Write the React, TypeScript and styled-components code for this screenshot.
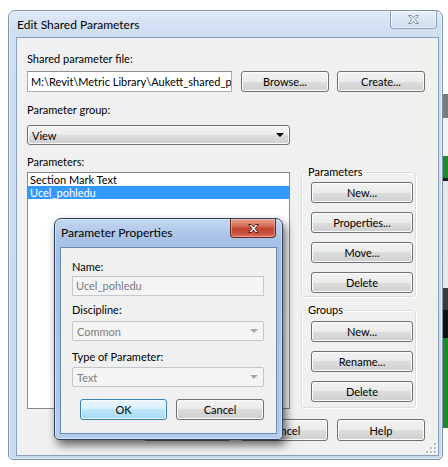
import React from "react";
import styled, { createGlobalStyle } from "styled-components";

const Global = createGlobalStyle`
  html, body { margin: 0; padding: 0; background: #ffffff; }
  body {
    font-family: Lato, "Noto Sans", sans-serif;
    font-size: 11px;
    color: #000;
  }
  * { box-sizing: border-box; }
`;

const Page = styled.div`
  position: relative;
  width: 448px;
  height: 467px;
  overflow: hidden;
  background: #fff;
`;

const Desk = styled.div`
  display: flex;
  align-items: flex-start;
  padding-left: 8px;
`;

const Window = styled.div<{ $active?: boolean }>`
  display: flex;
  flex-direction: column;
  border: 1px solid ${(p) => (p.$active ? "#2f4360" : "#7f91a9")};
  border-radius: 7px 7px 5px 5px;
  background: ${(p) =>
    p.$active
      ? "linear-gradient(180deg, #c3d7f1 0%, #a9c3e6 18px, #a3bfe3 40px, #b4cbea 100%)"
      : "linear-gradient(180deg, #dfe9f6 0%, #cfdef1 20px, #c8d8ed 100%)"};
  box-shadow: inset 0 0 0 1px rgba(255, 255, 255, 0.55);
`;

const MainWindow = styled(Window)`
  width: 435px;
  height: 450px;
  margin-top: 10px;
`;

const SubWindow = styled(Window)`
  position: absolute;
  left: 54px;
  top: 218px;
  width: 229px;
  height: 222px;
  box-shadow: inset 0 0 0 1px rgba(255, 255, 255, 0.45),
    3px 5px 10px rgba(0, 0, 0, 0.6);
`;

const TitleBar = styled.div<{ $h: number; $pl: number; $pr: number }>`
  display: flex;
  justify-content: space-between;
  align-items: flex-start;
  height: ${(p) => p.$h}px;
  padding-left: ${(p) => p.$pl}px;
  padding-right: ${(p) => p.$pr}px;
  flex: none;
`;

const Title = styled.div`
  margin-top: 6px;
  font-size: 12px;
  line-height: 16px;
  color: #000;
  white-space: nowrap;
`;

const CloseBtn = styled.div<{ $red?: boolean; $w: number; $h: number }>`
  width: ${(p) => p.$w}px;
  height: ${(p) => p.$h}px;
  display: flex;
  align-items: center;
  justify-content: center;
  border: 1px solid ${(p) => (p.$red ? "#6b2a22" : "#8a9db9")};
  border-top: none;
  border-radius: 0 0 4px 4px;
  background: ${(p) =>
    p.$red
      ? "linear-gradient(180deg, #e6a594 0%, #d56a55 40%, #c2432f 55%, #c9503f 80%, #dd7a68 100%)"
      : "linear-gradient(180deg, #e9f0f8 0%, #dbe6f3 50%, #d0ddee 100%)"};
  box-shadow: inset 0 0 0 1px
    ${(p) => (p.$red ? "rgba(255,200,190,0.45)" : "rgba(255,255,255,0.7)")};
`;

const Client = styled.div`
  position: relative;
  flex: 1;
  display: flex;
  flex-direction: column;
  background: #f0f0f0;
`;

const MainClient = styled(Client)`
  margin: 0 3px 3px 7px;
  border: 1px solid #8c9eb7;
  padding: 13px 13px 0 10px;
`;

const SubClient = styled(Client)`
  margin: 0 5px 5px 5px;
  border: 1px solid #6b89b2;
  padding: 11px 12px 0 11px;
`;

const Label = styled.div<{ $mt?: number }>`
  line-height: 15px;
  margin-top: ${(p) => p.$mt ?? 0}px;
  white-space: nowrap;
`;

const FileRow = styled.div`
  display: flex;
  margin-top: 5px;
  gap: 8px;
`;

const TextBox = styled.div<{ $disabled?: boolean; $w: number; $h: number; $mt?: number }>`
  width: ${(p) => p.$w}px;
  height: ${(p) => p.$h}px;
  margin-top: ${(p) => p.$mt ?? 0}px;
  margin-right: ${(p) => (p.$disabled ? 0 : 1)}px;
  border: 1px solid ${(p) => (p.$disabled ? "#c5c8cd" : "#abadb3")};
  border-top-color: ${(p) => (p.$disabled ? "#bfc2c7" : "#8e9199")};
  background: ${(p) => (p.$disabled ? "#f4f4f4" : "#fff")};
  color: ${(p) => (p.$disabled ? "#7a7a7a" : "#000")};
  padding-left: 3px;
  line-height: ${(p) => p.$h - 2}px;
  white-space: nowrap;
  overflow: hidden;
`;

const Button = styled.div<{ $w: number; $h?: number; $default?: boolean }>`
  width: ${(p) => p.$w}px;
  height: ${(p) => p.$h ?? 21}px;
  flex: none;
  display: flex;
  align-items: center;
  justify-content: center;
  border: 1px solid ${(p) => (p.$default ? "#3c7fb1" : "#707070")};
  border-radius: 3px;
  background: ${(p) =>
    p.$default
      ? "linear-gradient(180deg, #e9f6fd 0%, #d9f0fc 50%, #bee6fd 50%, #a7d9f5 100%)"
      : "linear-gradient(180deg, #f2f2f2 0%, #ebebeb 50%, #dddddd 50%, #cfcfcf 100%)"};
  box-shadow: inset 0 0 0 1px
    ${(p) => (p.$default ? "rgba(255,255,255,0.75)" : "#fcfcfc")};
  color: #000;
  line-height: 15px;
  white-space: nowrap;
`;

const Combo = styled.div<{ $disabled?: boolean; $w: number; $mt?: number }>`
  width: ${(p) => p.$w}px;
  height: 20px;
  margin-top: ${(p) => p.$mt ?? 0}px;
  display: flex;
  align-items: center;
  justify-content: space-between;
  padding: 0 5px 0 4px;
  border: 1px solid ${(p) => (p.$disabled ? "#c3c6cb" : "#707070")};
  border-radius: ${(p) => (p.$disabled ? 2 : 3)}px;
  background: ${(p) =>
    p.$disabled
      ? "#f4f4f4"
      : "linear-gradient(180deg, #f2f2f2 0%, #ebebeb 50%, #dddddd 50%, #cfcfcf 100%)"};
  box-shadow: ${(p) => (p.$disabled ? "none" : "inset 0 0 0 1px #fcfcfc")};
  color: ${(p) => (p.$disabled ? "#7d7d7d" : "#000")};
  white-space: nowrap;
`;

const Arrow = styled.span<{ $disabled?: boolean }>`
  width: 0;
  height: 0;
  border-left: 4px solid transparent;
  border-right: 4px solid transparent;
  border-top: 4px solid ${(p) => (p.$disabled ? "#a6a6a6" : "#000")};
`;

const MainArea = styled.div`
  display: flex;
  gap: 11px;
  margin-top: 9px;
`;

const LeftCol = styled.div`
  width: 263px;
  display: flex;
  flex-direction: column;
`;

const RightCol = styled.div`
  width: 115px;
  margin-top: 11px;
  display: flex;
  flex-direction: column;
`;

const ListBox = styled.div`
  margin-top: 3px;
  height: 237px;
  border: 1px solid #828790;
  background: #fff;
  display: flex;
  flex-direction: column;
`;

const ListItem = styled.div<{ $selected?: boolean }>`
  height: 13px;
  line-height: 13px;
  padding-left: 2px;
  background: ${(p) => (p.$selected ? "#3399ff" : "transparent")};
  color: ${(p) => (p.$selected ? "#fff" : "#000")};
  white-space: nowrap;
`;

const Group = styled.fieldset<{ $pt: number; $pb: number; $mt?: number }>`
  margin: ${(p) => p.$mt ?? 0}px 0 0 0;
  min-width: 0;
  padding: ${(p) => p.$pt}px 2px ${(p) => p.$pb}px 9px;
  border: 1px solid #d5dfe5;
  border-radius: 3px;
  box-shadow: inset 1px 1px 0 #fff, 1px 1px 0 #fff;
  display: flex;
  flex-direction: column;
  gap: 9px;
`;

const Legend = styled.legend`
  padding: 0 1px;
  margin-left: -4px;
  line-height: 14px;
  font-size: 11px;
  color: #000;
`;

const BottomRow = styled.div`
  display: flex;
  justify-content: flex-end;
  gap: 9px;
  margin-top: 10px;
`;

const SubButtons = styled.div`
  display: flex;
  justify-content: flex-end;
  gap: 9px;
  margin-top: 12px;
`;

const Grip = styled.svg`
  position: absolute;
  right: 1px;
  bottom: 1px;
`;

const Strip = styled.div`
  width: 5px;
  height: 467px;
  display: flex;
  flex-direction: column;
  flex: none;
`;

const StripPart = styled.div<{ $h: number; $c: string }>`
  height: ${(p) => p.$h}px;
  background: ${(p) => p.$c};
  flex: none;
`;

const Tick = styled.div`
  width: 1px;
  height: 8px;
  margin-left: 369px;
  background: #222;
`;

const XIcon = ({ fill, stroke }: { fill: string; stroke: string }) => (
  <svg width="13" height="11" viewBox="0 0 13 11">
    <path
      d="M1.5 1.5 H4.5 L6.5 4 L8.5 1.5 H11.5 L8 5.5 L11.5 9.5 H8.5 L6.5 7 L4.5 9.5 H1.5 L5 5.5 Z"
      fill={fill}
      stroke={stroke}
      strokeWidth="1"
      strokeLinejoin="round"
    />
  </svg>
);

export default function App() {
  return (
    <>
      <Global />
      <Page>
        <Desk>
          <MainWindow>
            <TitleBar $h={26} $pl={8} $pr={5}>
              <Title>Edit Shared Parameters</Title>
              <CloseBtn $w={47} $h={18}>
                <XIcon fill="#f4f7fb" stroke="#7d8ca3" />
              </CloseBtn>
            </TitleBar>
            <MainClient>
              <Label>Shared parameter file:</Label>
              <FileRow>
                <TextBox $w={205} $h={21}>
                  M:\Revit\Metric Library\Aukett_shared_p
                </TextBox>
                <Button $w={88}>Browse...</Button>
                <Button $w={88}>Create...</Button>
              </FileRow>
              <Label $mt={10}>Parameter group:</Label>
              <Combo $w={263} $mt={8}>
                <span>View</span>
                <Arrow />
              </Combo>
              <MainArea>
                <LeftCol>
                  <Label>Parameters:</Label>
                  <ListBox>
                    <ListItem>Section Mark Text</ListItem>
                    <ListItem $selected>Ucel_pohledu</ListItem>
                  </ListBox>
                </LeftCol>
                <RightCol>
                  <Group $pt={3} $pb={3}>
                    <Legend>Parameters</Legend>
                    <Button $w={102}>New...</Button>
                    <Button $w={102}>Properties...</Button>
                    <Button $w={102}>Move...</Button>
                    <Button $w={102}>Delete</Button>
                  </Group>
                  <Group $pt={4} $pb={5} $mt={6}>
                    <Legend>Groups</Legend>
                    <Button $w={102}>New...</Button>
                    <Button $w={102}>Rename...</Button>
                    <Button $w={102}>Delete</Button>
                  </Group>
                </RightCol>
              </MainArea>
              <BottomRow>
                <Button $w={88} $h={22}>OK</Button>
                <Button $w={88} $h={22}>Cancel</Button>
                <Button $w={88} $h={22}>Help</Button>
              </BottomRow>
              <Grip width="11" height="11" viewBox="0 0 11 11">
                {[
                  [8, 0],
                  [8, 4],
                  [4, 4],
                  [8, 8],
                  [4, 8],
                  [0, 8],
                ].map(([x, y], i) => (
                  <g key={i}>
                    <rect x={x + 1} y={y + 1} width="2" height="2" fill="#fff" />
                    <rect x={x} y={y} width="2" height="2" fill="#b8bcc2" />
                  </g>
                ))}
              </Grip>
            </MainClient>
          </MainWindow>
          <Strip>
            <StripPart $h={94} $c="#ffffff" />
            <StripPart $h={24} $c="#7b7b7b" />
            <StripPart $h={38} $c="#f4f4f4" />
            <StripPart $h={22} $c="#1f8a2b" />
            <StripPart $h={3} $c="#1a1a1a" />
            <StripPart $h={107} $c="#e8e8e8" />
            <StripPart $h={22} $c="#3a3a3a" />
            <StripPart $h={28} $c="#111111" />
            <StripPart $h={90} $c="#1c8a2a" />
            <StripPart $h={39} $c="#ffffff" />
          </Strip>
        </Desk>
        <Tick />
        <SubWindow $active>
          <TitleBar $h={28} $pl={6} $pr={6}>
            <Title>Parameter Properties</Title>
            <CloseBtn $red $w={46} $h={19}>
              <XIcon fill="#ffffff" stroke="#5c2119" />
            </CloseBtn>
          </TitleBar>
          <SubClient>
            <Label>Name:</Label>
            <TextBox $disabled $w={192} $h={20} $mt={2}>
              Ucel_pohledu
            </TextBox>
            <Label $mt={6}>Discipline:</Label>
            <Combo $disabled $w={192} $mt={4}>
              <span>Common</span>
              <Arrow $disabled />
            </Combo>
            <Label $mt={8}>Type of Parameter:</Label>
            <Combo $disabled $w={192} $mt={3}>
              <span>Text</span>
              <Arrow $disabled />
            </Combo>
            <SubButtons>
              <Button $w={87} $default>OK</Button>
              <Button $w={88}>Cancel</Button>
            </SubButtons>
          </SubClient>
        </SubWindow>
      </Page>
    </>
  );
}
